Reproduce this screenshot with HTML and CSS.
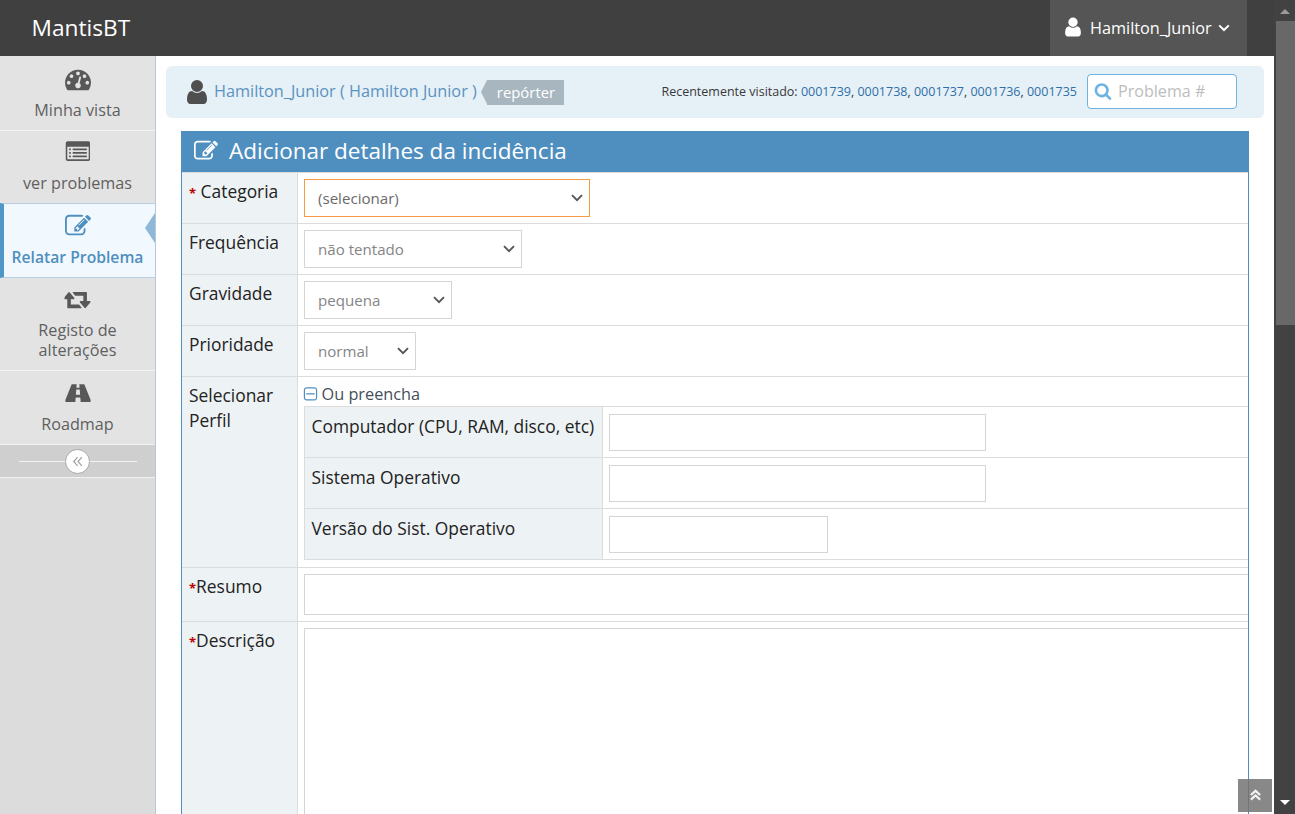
FILE: index.html
```html
<!DOCTYPE html>
<html lang="pt">
<head>
<meta charset="utf-8">
<title>MantisBT</title>
<link rel="stylesheet" href="styles.css">
</head>
<body>
<svg class="sprite" xmlns="http://www.w3.org/2000/svg">
  <symbol id="i-user" viewBox="0 0 1792 1792"><path d="M1536 1399q0 109-62.5 187t-150.5 78h-854q-88 0-150.5-78t-62.5-187q0-85 8.5-160.5t31.5-152 58.5-131 94-89 134.5-34.5q131 128 313 128t313-128q76 0 134.5 34.5t94 89 58.5 131 31.5 152 8.5 160.5zm-256-887q0 159-112.5 271.5t-271.5 112.5-271.5-112.5-112.5-271.5 112.5-271.5 271.5-112.5 271.5 112.5 112.5 271.5z"/></symbol>
  <symbol id="i-search" viewBox="0 0 1792 1792"><path d="M1216 832q0-185-131.5-316.5t-316.5-131.5-316.5 131.5-131.5 316.5 131.5 316.5 316.5 131.5 316.5-131.5 131.5-316.5zm512 832q0 52-38 90t-90 38q-54 0-90-38l-343-342q-179 124-399 124-143 0-273.5-55.5t-225-150-150-225-55.5-273.5 55.5-273.5 150-225 225-150 273.5-55.5 273.5 55.5 225 150 150 225 55.5 273.5q0 220-124 399l343 343q37 37 37 90z"/></symbol>
  <symbol id="i-edit" viewBox="0 0 1792 1792"><path d="M888 1184l116-116-152-152-116 116v56h96v96h56zm440-720q-16-16-33 1l-350 350q-17 17-1 33t33-1l350-350q17-17 1-33zm80 594v190q0 119-84.5 203.5t-203.5 84.5h-832q-119 0-203.5-84.5t-84.5-203.5v-832q0-119 84.5-203.5t203.5-84.5h832q63 0 117 25 15 7 18 23 3 17-9 29l-49 49q-14 14-32 8-23-6-45-6h-832q-66 0-113 47t-47 113v832q0 66 47 113t113 47h832q66 0 113-47t47-113v-126q0-13 9-22l64-64q15-15 35-7t20 29zm-96-738l288 288-672 672h-288v-288zm444 132l-92 92-288-288 92-92q28-28 68-28t68 28l152 152q28 28 28 68t-28 68z"/></symbol>
  <symbol id="i-gauge" viewBox="0 0 1792 1792"><path d="M384 1152q0-53-37.5-90.5t-90.5-37.5-90.5 37.5-37.5 90.5 37.5 90.5 90.5 37.5 90.5-37.5 37.5-90.5zm192-448q0-53-37.5-90.5t-90.5-37.5-90.5 37.5-37.5 90.5 37.5 90.5 90.5 37.5 90.5-37.5 37.5-90.5zm428 481l101-382q6-26-7.5-48.5t-38.5-29.5-48 6.5-30 39.5l-101 382q-60 5-107 43.5t-63 98.5q-20 77 20 146t117 89 146-20 89-117q16-60-6-117t-72-91zm660-33q0-53-37.5-90.5t-90.5-37.5-90.5 37.5-37.5 90.5 37.5 90.5 90.5 37.5 90.5-37.5 37.5-90.5zm-640-640q0-53-37.5-90.5t-90.5-37.5-90.5 37.5-37.5 90.5 37.5 90.5 90.5 37.5 90.5-37.5 37.5-90.5zm448 192q0-53-37.5-90.5t-90.5-37.5-90.5 37.5-37.5 90.5 37.5 90.5 90.5 37.5 90.5-37.5 37.5-90.5zm320 448q0 261-141 483-19 29-54 29h-1402q-35 0-54-29-141-221-141-483 0-182 71-348t191-286 286-191 348-71 348 71 286 191 191 286 71 348z"/></symbol>
  <symbol id="i-list" viewBox="0 0 1792 1792"><path d="M384 1184v64q0 13-9.5 22.5t-22.5 9.5h-64q-13 0-22.5-9.5t-9.5-22.5v-64q0-13 9.5-22.5t22.5-9.5h64q13 0 22.5 9.5t9.5 22.5zm0-256v64q0 13-9.5 22.5t-22.5 9.5h-64q-13 0-22.5-9.5t-9.5-22.5v-64q0-13 9.5-22.5t22.5-9.5h64q13 0 22.5 9.5t9.5 22.5zm0-256v64q0 13-9.5 22.5t-22.5 9.5h-64q-13 0-22.5-9.5t-9.5-22.5v-64q0-13 9.5-22.5t22.5-9.5h64q13 0 22.5 9.5t9.5 22.5zm1152 512v64q0 13-9.5 22.5t-22.5 9.5h-960q-13 0-22.5-9.5t-9.5-22.5v-64q0-13 9.5-22.5t22.5-9.5h960q13 0 22.5 9.5t9.5 22.5zm0-256v64q0 13-9.5 22.5t-22.5 9.5h-960q-13 0-22.5-9.5t-9.5-22.5v-64q0-13 9.5-22.5t22.5-9.5h960q13 0 22.5 9.5t9.5 22.5zm0-256v64q0 13-9.5 22.5t-22.5 9.5h-960q-13 0-22.5-9.5t-9.5-22.5v-64q0-13 9.5-22.5t22.5-9.5h960q13 0 22.5 9.5t9.5 22.5zm128 704v-832q0-13-9.5-22.5t-22.5-9.5h-1472q-13 0-22.5 9.5t-9.5 22.5v832q0 13 9.5 22.5t22.5 9.5h1472q13 0 22.5-9.5t9.5-22.5zm128-1088v1088q0 66-47 113t-113 47h-1472q-66 0-113-47t-47-113v-1088q0-66 47-113t113-47h1472q66 0 113 47t47 113z"/></symbol>
  <symbol id="i-retweet" viewBox="0 0 1920 1792"><path d="M1216 1376q0 13-9.5 22.5t-22.5 9.5h-960q-8 0-13.5-2t-9-7-5.5-8-3-11.5-1-11.5v-600h-192q-26 0-45-19t-19-45q0-24 15-41l320-384q19-22 49-22t49 22l320 384q15 17 15 41 0 26-19 45t-45 19h-192v384h576q16 0 25 11l160 192q7 10 7 21zm640-416q0 24-15 41l-320 384q-20 23-49 23t-49-23l-320-384q-15-17-15-41 0-26 19-45t45-19h192v-384h-576q-16 0-25-12l-160-192q-7-9-7-20 0-13 9.5-22.5t22.5-9.5h960q8 0 13.5 2t9 7 5.5 8 3 11.5 1 11.5v600h192q26 0 45 19t19 45z"/></symbol>
  <symbol id="i-road" viewBox="0 0 1920 1792"><path d="M1111 1000v-4l-24-320q-1-13-11-22.5t-23-9.5h-186q-13 0-23 9.5t-11 22.5l-24 320v4q-1 12 8 20t21 8h244q12 0 21-8t8-20zm759 467q0 73-46 73h-704q13 0 22-9.5t8-22.5l-20-256q-1-13-11-22.5t-23-9.5h-272q-13 0-23 9.5t-11 22.5l-20 256q-1 13 8 22.5t22 9.5h-704q-46 0-46-73 0-54 26-116l417-1044q8-19 26-33t38-14h339q-13 0-23 9.5t-11 22.5l-15 192q-1 14 8 23t22 9h166q13 0 22-9t8-23l-15-192q-1-13-11-22.5t-23-9.5h339q20 0 38 14t26 33l417 1044q26 62 26 116z"/></symbol>
  <symbol id="i-minus" viewBox="0 0 1792 1792"><path d="M1344 800v64q0 14-9 23t-23 9h-832q-14 0-23-9t-9-23v-64q0-14 9-23t23-9h832q14 0 23 9t9 23zm128 448v-832q0-66-47-113t-113-47h-832q-66 0-113 47t-47 113v832q0 66 47 113t113 47h832q66 0 113-47t47-113zm128-832v832q0 119-84.5 203.5t-203.5 84.5h-832q-119 0-203.5-84.5t-84.5-203.5v-832q0-119 84.5-203.5t203.5-84.5h832q119 0 203.5 84.5t84.5 203.5z"/></symbol>
</svg>

<header class="navbar">
  <a class="brand">MantisBT</a>
  <div class="user-menu">
    <svg class="ico ico-nav-user"><use href="#i-user"/></svg>
    <span>Hamilton_Junior</span>
    <svg class="ico-chev" viewBox="0 0 12 8"><polyline points="1.2,1.4 6,6 10.8,1.4"/></svg>
  </div>
</header>

<div class="layout">
  <nav class="sidebar">
    <a class="nav-item n1">
      <svg class="ico nav-ico"><use href="#i-gauge"/></svg>
      <span>Minha vista</span>
    </a>
    <a class="nav-item n2">
      <svg class="ico nav-ico tight"><use href="#i-list"/></svg>
      <span>ver problemas</span>
    </a>
    <a class="nav-item n3 active">
      <svg class="ico nav-ico"><use href="#i-edit"/></svg>
      <span>Relatar Problema</span>
    </a>
    <a class="nav-item n4">
      <svg class="ico nav-ico wide"><use href="#i-retweet"/></svg>
      <span>Registo de<br>alterações</span>
    </a>
    <a class="nav-item n5">
      <svg class="ico nav-ico wide"><use href="#i-road"/></svg>
      <span>Roadmap</span>
    </a>
    <div class="collapse">
      <span class="collapse-btn">
        <svg viewBox="0 0 14 12"><polyline points="6.5,1 2,6 6.5,11"/><polyline points="11.5,1 7,6 11.5,11"/></svg>
      </span>
    </div>
  </nav>

  <main class="content">
    <div class="crumbs">
      <svg class="ico crumb-user"><use href="#i-user"/></svg>
      <a class="crumb-link">Hamilton_Junior ( Hamilton Junior )</a>
      <span class="role">repórter</span>
      <span class="recent">Recentemente visitado: <a>0001739</a>, <a>0001738</a>, <a>0001737</a>, <a>0001736</a>, <a>0001735</a></span>
      <label class="search">
        <svg class="ico"><use href="#i-search"/></svg>
        <input type="text" placeholder="Problema #">
      </label>
    </div>

    <section class="widget">
      <h4 class="widget-title">
        <svg class="ico"><use href="#i-edit"/></svg>
        Adicionar detalhes da incidência
      </h4>
      <table class="form">
        <tr class="r51">
          <th><span class="req">*</span> Categoria</th>
          <td><select class="sel focus w286"><option>(selecionar)</option></select></td>
        </tr>
        <tr class="r51">
          <th>Frequência</th>
          <td><select class="sel w218"><option>não tentado</option></select></td>
        </tr>
        <tr class="r51">
          <th>Gravidade</th>
          <td><select class="sel w148"><option>pequena</option></select></td>
        </tr>
        <tr class="r51">
          <th>Prioridade</th>
          <td><select class="sel w112"><option>normal</option></select></td>
        </tr>
        <tr>
          <th>Selecionar Perfil</th>
          <td class="profile">
            <div class="toggle"><svg class="ico"><use href="#i-minus"/></svg> Ou preencha</div>
            <table class="sub">
              <tr>
                <th>Computador (CPU, RAM, disco, etc)</th>
                <td><input class="txt w377" type="text"></td>
              </tr>
              <tr>
                <th>Sistema Operativo</th>
                <td><input class="txt w377" type="text"></td>
              </tr>
              <tr>
                <th>Versão do Sist. Operativo</th>
                <td><input class="txt w219" type="text"></td>
              </tr>
            </table>
          </td>
        </tr>
        <tr>
          <th><span class="req">*</span>Resumo</th>
          <td class="wide-cell"><input class="txt full" type="text"></td>
        </tr>
        <tr>
          <th><span class="req">*</span>Descrição</th>
          <td class="wide-cell"><textarea class="area"></textarea></td>
        </tr>
      </table>
    </section>
  </main>
</div>

<a class="to-top">
  <svg viewBox="0 0 14 14"><polyline points="2,6.5 7,2 12,6.5"/><polyline points="2,11.5 7,7 12,11.5"/></svg>
</a>

<div class="scrollbar">
  <span class="arrow up"></span>
  <span class="thumb"></span>
  <span class="arrow down"></span>
</div>
</body>
</html>
```

FILE: styles.css
```css
* { box-sizing: border-box; }
html, body { margin: 0; height: 814px; overflow: hidden; }
body {
  font-family: "Open Sans", sans-serif;
  font-size: 16px;
  line-height: 1.5;
  color: #393939;
  background: #fff;
  position: relative;
}
.sprite { display: none; }
.ico { fill: currentColor; display: inline-block; }

.navbar {
  height: 56px;
  background: #404040;
  display: flex;
  align-items: stretch;
  padding-right: 48px;
  justify-content: space-between;
  color: #fff;
}
.brand { font-size: 22.7px; line-height: 55px; padding-left: 31.5px; color: #fff; }
.user-menu {
  width: 197px;
  background: #555;
  display: flex;
  align-items: center;
  padding-left: 12px;
  font-size: 16.25px;
}
.ico-nav-user { width: 22px; height: 22px; margin-right: 6px; margin-top: -2px; }
.ico-chev { width: 12px; height: 8px; margin-left: 6px; margin-top: -1px; }
.ico-chev polyline { fill: none; stroke: #fff; stroke-width: 2; }

.layout { display: flex; height: 758px; }

.sidebar {
  width: 156px;
  flex: none;
  background: #dcdcdc;
  border-right: 1px solid #b5c8d8;
  display: flex;
  flex-direction: column;
}
.nav-item {
  display: flex;
  flex-direction: column;
  align-items: center;
  text-align: center;
  background: #e3e3e3;
  border-bottom: 1px solid #f2f2f2;
  color: #5f5f5f;
  font-size: 16.2px;
  line-height: 20px;
  position: relative;
}
.nav-ico {
  width: 28px;
  height: 28px;
  padding: 1px;
  color: #585858;
  flex: none;
}
.nav-ico.tight { padding: 1.5px; }
.nav-ico.wide { width: 30px; padding: 1.5px; }
.n1 { height: 75px; padding-top: 11px; }
.n1 .nav-ico { margin-bottom: 7px; margin-top: -2px; }
.n2 { height: 73px; padding-top: 7px; }
.n2 .nav-ico { margin-bottom: 7px; }
.n3 { padding-top: 8px; }
.n3 .nav-ico { margin-bottom: 7px; }
.n4 { height: 93px; padding-top: 9px; }
.n4 .nav-ico { margin-bottom: 5px; }
.n5 { height: 74px; padding-top: 8px; }
.n5 .nav-ico { margin-bottom: 7px; }

.nav-item.active {
  background: #f2f9fe;
  color: #4f8fbf;
  font-weight: 600;
  font-size: 15.7px;
  border-bottom: 1px solid #b9cfe0;
  border-top: 1px solid #b9cfe0;
  border-left: 4px solid #4f96c9;
  margin-top: -1px;
  padding-right: 4px;
  height: 75px;
}
.nav-item.active .nav-ico { color: #4f8fbf; }
.nav-item.active::after {
  content: "";
  position: absolute;
  right: 0;
  top: 9px;
  border: 15px solid transparent;
  border-right: 10px solid #8fb8d8;
  border-left: 0;
}
.collapse {
  height: 33px;
  background: #cfcfcf;
  border-bottom: 1px solid #f2f2f2;
  display: flex;
  align-items: center;
  justify-content: center;
  background-image: linear-gradient(#f2f2f2, #f2f2f2);
  background-size: 118px 1px;
  background-position: center;
  background-repeat: no-repeat;
}
.collapse-btn {
  width: 25px;
  height: 25px;
  border-radius: 50%;
  background: #fff;
  border: 1px solid #a8a8a8;
  display: flex;
  align-items: center;
  justify-content: center;
}
.collapse-btn svg { width: 12px; height: 11px; }
.collapse-btn polyline { fill: none; stroke: #a0a0a0; stroke-width: 1.4; }

.content { flex: 1; padding: 10px 0 0 10px; min-width: 0; }

.crumbs {
  width: 1098px;
  height: 52px;
  background: #e6f0f7;
  border-radius: 6px;
  display: flex;
  align-items: center;
  padding-left: 17px;
  padding-right: 27px;
}
.crumb-user { width: 28px; height: 28px; color: #4f4f4f; margin-right: 3px; margin-top: -1px; flex: none; }
.crumb-link { color: #5b93c0; font-size: 16.25px; margin-top: -2px; }
.role {
  position: relative;
  margin-left: 10px;
  background: #a7b6bf;
  color: #fff;
  font-size: 14.9px;
  font-weight: 400;
  height: 25px;
  line-height: 25px;
  padding: 0 9px 0 10px;
  margin-top: 1px;
}
.role::before {
  content: "";
  position: absolute;
  left: -6px;
  top: 0;
  border: 12.5px solid transparent;
  border-right: 6px solid #a7b6bf;
  border-left: 0;
}
.recent { margin-left: auto; font-size: 12.5px; color: #393939; }
.recent a { color: #2f6fa7; }
.search {
  margin-left: 10px;
  margin-bottom: 1px;
  width: 150px;
  height: 35px;
  border: 1px solid #6fb3e0;
  border-radius: 4px;
  background: #fff;
  display: flex;
  align-items: center;
  padding-left: 6px;
  color: #6fb3e0;
}
.search .ico { width: 18px; height: 18px; flex: none; margin-top: -1px; }
.search input {
  border: 0;
  outline: 0;
  width: 110px;
  padding: 0 0 0 6px;
  margin-bottom: 2px;
  font: 16.1px "Open Sans", sans-serif;
  background: transparent;
}
.search input::placeholder { color: #bdbdbd; opacity: 1; }

.widget {
  width: 1068px;
  margin: 13px 0 0 15px;
  border-left: 1px solid #4f8fbf;
  border-right: 1px solid #4f8fbf;
  overflow: hidden;
  height: 700px;
}
.widget-title {
  margin: 0 -1px;
  height: 41px;
  background: #4f8fbf;
  color: #fff;
  font-size: 22.5px;
  font-weight: 400;
  padding: 0 0 2px 13px;
  display: flex;
  align-items: center;
  gap: 11px;
}
.widget-title .ico { width: 24px; height: 24px; flex: none; }

.form { border-collapse: collapse; width: 1066px; table-layout: fixed; }
.form > tbody > tr > th {
  width: 115px;
  background: #edf2f5;
  border-right: 1px solid #dcdcdc;
  border-top: 1px solid #dcdcdc;
  border-bottom: 1px solid #dcdcdc;
  font-weight: 400;
  font-size: 17.4px;
  text-align: left;
  vertical-align: top;
  padding: 6px 7px;
  color: #222;
  line-height: 25px;
}
.form > tbody > tr > td {
  border-top: 1px solid #dcdcdc;
  border-bottom: 1px solid #dcdcdc;
  padding: 6px 6px;
  vertical-align: top;
}
.r51 { height: 51px; }
.req { color: #c00000; font-weight: 700; font-size: 13px; }

.sel {
  display: block;
  height: 38px;
  border: 1px solid #d5d5d5;
  background: #fff url("data:image/svg+xml,%3Csvg xmlns='http://www.w3.org/2000/svg' viewBox='0 0 12 8'%3E%3Cpolyline points='1,1.2 6,6.2 11,1.2' fill='none' stroke='%23555' stroke-width='1.9'/%3E%3C/svg%3E") no-repeat right 6px center / 12px 8px;
  color: #858585;
  font: 15.1px "Open Sans", sans-serif;
  padding: 0 9px 0 13.5px;
  border-radius: 0;
  appearance: none;
  -webkit-appearance: none;
}
.sel.focus { border-color: #f59942; color: #696969; }
.w286 { width: 286px; }
.w218 { width: 218px; }
.w148 { width: 148px; }
.w112 { width: 112px; }

.form > tbody > tr > td.profile { padding: 5px 0 7px 6px; }
.toggle { display: flex; align-items: center; gap: 3px; height: 24px; color: #444f5a; line-height: 24px; font-size: 16.3px; }
.toggle .ico { width: 17px; height: 17px; color: #4f8fbf; margin-left: -2px; flex: none; }

.sub { border-collapse: collapse; width: 100%; table-layout: fixed; }
.sub th {
  width: 298px;
  background: #edf2f5;
  border: 1px solid #dcdcdc;
  font-weight: 400;
  font-size: 17.4px;
  text-align: left;
  vertical-align: top;
  padding: 7px 7px 5px;
  color: #222;
  line-height: 25px;
  height: 51px;
  white-space: nowrap;
}
.sub td {
  border-top: 1px solid #dcdcdc;
  border-bottom: 1px solid #dcdcdc;
  padding: 7px 6px 6px;
  vertical-align: top;
}
.txt {
  display: block;
  height: 37px;
  border: 1px solid #d5d5d5;
  background: #fff;
  padding: 0 8px;
  border-radius: 0;
}
.w377 { width: 377px; }
.w219 { width: 219px; }
.full { width: 960px; height: 41px; }
.area {
  display: block;
  width: 960px;
  height: 400px;
  border: 1px solid #d5d5d5;
  resize: none;
  border-radius: 0;
}

.to-top {
  position: absolute;
  left: 1238px;
  top: 779px;
  width: 34px;
  height: 33px;
  background: rgba(115, 115, 115, 0.85);
  display: flex;
  align-items: center;
  justify-content: center;
}
.to-top svg { width: 13px; height: 13px; }
.to-top polyline { fill: none; stroke: #f2f2f2; stroke-width: 2.4; }

.scrollbar {
  position: absolute;
  right: 0;
  top: 0;
  width: 21px;
  height: 814px;
  background: #424242;
}
.thumb {
  position: absolute;
  left: 2px;
  right: 0;
  top: 21px;
  height: 304px;
  background: #686868;
}
.arrow {
  position: absolute;
  left: 6px;
  border-left: 5px solid transparent;
  border-right: 5px solid transparent;
}
.arrow.up { top: 9px; border-bottom: 5px solid #9a9a9a; }
.arrow.down { bottom: 9px; border-top: 5px solid #fff; }
```
